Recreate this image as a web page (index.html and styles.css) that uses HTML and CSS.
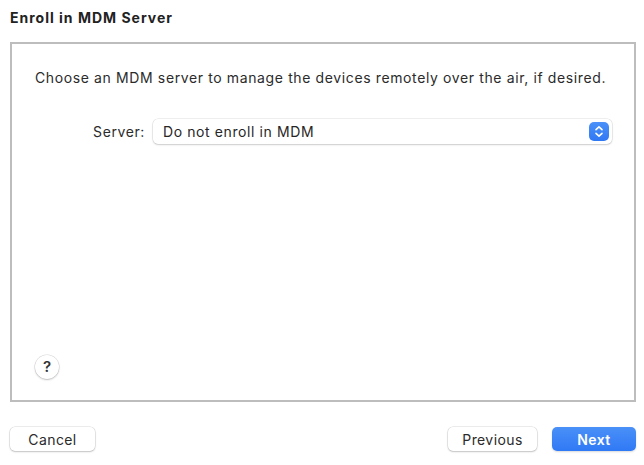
FILE: index.html
```html
<!DOCTYPE html>
<html lang="en">
<head>
    <meta charset="UTF-8">
    <meta name="viewport" content="width=device-width, initial-scale=1.0">
    <title>Enroll in MDM Server</title>

    <link rel="stylesheet" href="styles.css">
</head>
<body>
    <section class="sheet">
        <h1 class="title">Enroll in MDM Server</h1>

        <div class="panel">
            <p class="intro">Choose an MDM server to manage the devices remotely over the air, if desired.</p>

            <div class="field">
                <label class="field_label">Server:</label>
                <div class="popup">
                    <span class="popup_value">Do not enroll in MDM</span>
                    <span class="stepper">
                        <svg width="10" height="13" viewBox="0 0 10 13">
                            <path d="M2 4.6 L5 1.8 L8 4.6" fill="none" stroke="#fff" stroke-width="1.6" stroke-linecap="round" stroke-linejoin="round"/>
                            <path d="M2 8.4 L5 11.2 L8 8.4" fill="none" stroke="#fff" stroke-width="1.6" stroke-linecap="round" stroke-linejoin="round"/>
                        </svg>
                    </span>
                </div>
            </div>

            <button class="help">?</button>
        </div>

        <div class="button_area">
            <button class="btn cancel">Cancel</button>
            <span class="spacer"></span>
            <button class="btn previous">Previous</button>
            <button class="btn next">Next</button>
        </div>
    </section>
</body>
</html>
```

FILE: styles.css
```css
*{
    margin: 0;
    padding: 0;
    box-sizing: border-box;
    font-family: Inter, "Liberation Sans", Arial, sans-serif;
}

body{
    background: #fff;
    color: #262626;
    width: 644px;
    height: 465px;
}

.sheet{
    padding: 9px 8px 0 10px;
}

.title{
    font-size: 14px;
    font-weight: 700;
    letter-spacing: 1px;
    line-height: 18px;
    color: #222;
}

.panel{
    margin-top: 15px;
    height: 360px;
    border: 2px solid #bdbdbd;
    display: flex;
    flex-direction: column;
    padding: 25px 22px 21px 23px;
}

.intro{
    font-size: 14px;
    letter-spacing: 0.62px;
    line-height: 18px;
    color: #2b2b2b;
    white-space: nowrap;
}

.field{
    display: flex;
    align-items: center;
    margin-top: 32px;
}

.field_label{
    width: 110px;
    text-align: right;
    font-size: 14px;
    letter-spacing: 0.6px;
    color: #2b2b2b;
    margin-right: 8px;
}

.popup{
    flex: 1;
    height: 25px;
    display: flex;
    align-items: center;
    justify-content: space-between;
    background: #fff;
    border-radius: 5px;
    box-shadow: 0 0 0 0.5px rgba(0,0,0,0.12), 0 1px 2px rgba(0,0,0,0.15);
    padding: 0 3px 0 10px;
}

.popup_value{
    font-size: 14px;
    letter-spacing: 0.6px;
    color: #262626;
}

.stepper{
    width: 20px;
    height: 19px;
    border-radius: 5px;
    background: linear-gradient(#4b91f9, #2f78f4);
    display: flex;
    align-items: center;
    justify-content: center;
}

.help{
    margin-top: auto;
    width: 24px;
    height: 24px;
    border-radius: 50%;
    border: none;
    background: #fff;
    box-shadow: 0 0 0 0.5px rgba(0,0,0,0.15), 0 1px 2px rgba(0,0,0,0.2);
    font-size: 15px;
    font-weight: 600;
    color: #333;
    line-height: 24px;
}

.button_area{
    display: flex;
    align-items: center;
    margin-top: 25px;
}

.spacer{
    flex: 1;
}

.btn{
    height: 24px;
    border: none;
    border-radius: 5px;
    background: #fff;
    font-size: 14px;
    letter-spacing: 0.4px;
    color: #2b2b2b;
    box-shadow: 0 0 0 0.5px rgba(0,0,0,0.14), 0 1px 2px rgba(0,0,0,0.18);
}

.cancel{
    width: 85px;
}

.previous{
    width: 89px;
}

.next{
    width: 84px;
    margin-left: 15px;
    background: linear-gradient(#4a90f8, #2f79f5);
    color: #fff;
    font-weight: 600;
    box-shadow: 0 1px 2px rgba(0,0,0,0.15);
}
```
